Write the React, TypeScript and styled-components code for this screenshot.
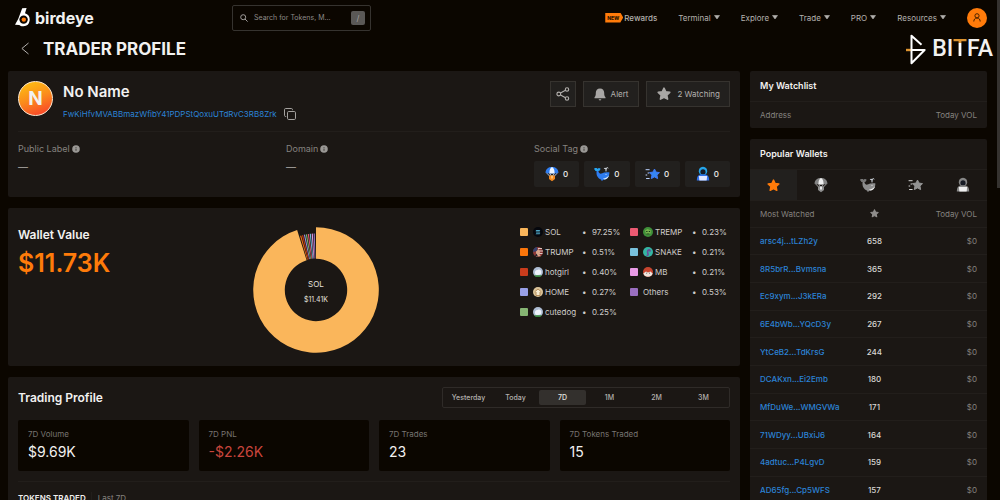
import React from "react";
import styled, { createGlobalStyle, css } from "styled-components";

const c = {
  page: "#0b0600",
  panel: "#1b1714",
  raised: "#22201e",
  line: "#221e1b",
  border: "#36332f",
  text: "#f2f1f0",
  soft: "#b4b1ae",
  muted: "#85827f",
  link: "#2b83d6",
  orange: "#ff7b0a",
  red: "#c9453c",
};

const GlobalStyle = createGlobalStyle`
  *, *::before, *::after { box-sizing: border-box; }
  html { background: ${c.page}; scrollbar-width: none; }
  body {
    margin: 0;
    background: ${c.page};
    color: ${c.text};
    font-family: Inter, "Liberation Sans", sans-serif;
    font-size: 8px;
    line-height: 12px;
  }
  h1, h2, p, ul, dl, dd, dt { margin: 0; padding: 0; }
  ul { list-style: none; }
  button, input { font: inherit; color: inherit; }
  button { border: 0; background: none; padding: 0; cursor: pointer; }
  a { text-decoration: none; color: inherit; }
  svg { display: block; flex: none; }
`;

const Header = styled.header`
  display: flex;
  align-items: center;
  height: 35px;
  padding: 0 13px 0 15px;
`;

const Brand = styled.a`
  display: flex;
  align-items: center;
  gap: 5px;
  width: 217px;
  font-size: 16px;
  line-height: 20px;
  font-weight: 700;
`;

const SearchBox = styled.label`
  display: flex;
  align-items: center;
  gap: 6px;
  width: 139px;
  height: 26px;
  padding: 0 5px 0 7px;
  border: 1px solid ${c.border};
  border-radius: 2px;
`;

const SearchInput = styled.input`
  flex: 1;
  min-width: 0;
  padding: 0;
  border: 0;
  outline: 0;
  background: none;
  font-size: 7px;
  &::placeholder { color: #8d8a87; opacity: 1; }
`;

const SlashKey = styled.kbd`
  width: 14px;
  height: 14px;
  border-radius: 2px;
  background: #5a5856;
  color: #a5a3a1;
  font-family: inherit;
  font-size: 8px;
  line-height: 14px;
  text-align: center;
`;

const Nav = styled.nav`
  display: flex;
  align-items: center;
  gap: 21px;
  margin-left: auto;
  color: ${c.soft};
`;

const RewardsLink = styled.a`
  display: flex;
  align-items: center;
  gap: 1px;
  font-weight: 500;
`;

const NewBadge = styled.span`
  width: 18px;
  height: 10px;
  padding-left: 2px;
  background: ${c.orange};
  clip-path: polygon(0 0, 84% 0, 100% 50%, 84% 100%, 0 100%);
  color: #2a1400;
  font-size: 5px;
  line-height: 10px;
  font-weight: 800;
`;

const NavButton = styled.button`
  display: flex;
  align-items: center;
  gap: 3px;
`;

const Avatar = styled.button`
  display: grid;
  place-items: center;
  width: 20px;
  height: 20px;
  border-radius: 50%;
  background: ${c.orange};
`;

const TitleRow = styled.div`
  display: flex;
  align-items: center;
  height: 28px;
  margin-bottom: 8px;
  padding: 0 7px 0 21px;
`;

const PageTitle = styled.h1`
  margin-left: 14px;
  font-size: 17px;
  line-height: 28px;
  font-weight: 700;
`;

const Partner = styled.div`
  display: flex;
  align-items: center;
  gap: 6px;
  margin-left: auto;
  font-family: Roboto, "Liberation Sans", sans-serif;
  font-size: 23px;
  line-height: 28px;
  font-weight: 500;
`;

const TwoToneLetter = styled.span`
  background: linear-gradient(#de9430 0 8px, #fff 8px);
  background-clip: text;
  -webkit-background-clip: text;
  color: transparent;
`;

const Main = styled.main`
  display: grid;
  grid-template-columns: minmax(0, 1fr) 237px;
  gap: 10px;
  padding: 0 13px 0 8px;
`;

const Column = styled.div`
  display: flex;
  flex-direction: column;
  gap: 11px;
`;

const Panel = styled.section<{ $fill?: boolean; $flush?: boolean }>`
  padding: ${(p) => (p.$flush ? "0" : "10px")};
  border-radius: 2px;
  background: ${c.panel};
  ${(p) => p.$fill && css`flex: 1;`}
`;

const ProfileHead = styled.div`
  display: flex;
  align-items: flex-start;
  height: 51px;
  border-bottom: 1px solid ${c.line};
`;

const Portrait = styled.div`
  display: grid;
  place-items: center;
  width: 35px;
  height: 35px;
  margin-right: 10px;
  border: 1px solid #ffe9cf;
  border-radius: 50%;
  background: linear-gradient(160deg, #fdb913 10%, #fb8a1c 50%, #f9402a 95%);
  font-size: 19px;
  line-height: 24px;
  font-weight: 700;
`;

const ProfileName = styled.h2`
  font-size: 15px;
  line-height: 22px;
  font-weight: 600;
`;

const AddressRow = styled.div`
  display: flex;
  align-items: center;
  gap: 7px;
  height: 22px;
`;

const AddressLink = styled.a`
  color: ${c.link};
`;

const Actions = styled.div`
  display: flex;
  gap: 7px;
  margin-left: auto;
`;

const ActionButton = styled.button`
  display: flex;
  align-items: center;
  gap: 5px;
  height: 26px;
  padding: 0 10px;
  border: 1px solid ${c.border};
  background: ${c.raised};
  color: ${c.soft};
`;

const IconButton = styled(ActionButton)`
  padding: 0 5px;
`;

const WatchButton = styled(ActionButton)`
  gap: 6px;
  padding: 0 9px 0 10px;
`;

const Facts = styled.dl`
  display: grid;
  grid-template-columns: 1fr 1fr 224px;
`;

const Fact = styled.div<{ $inset?: number }>`
  display: flex;
  flex-direction: column;
  gap: 6px;
  padding: 11px 0 0 ${(p) => p.$inset ?? 0}px;
`;

const FactLabel = styled.dt`
  display: flex;
  align-items: center;
  gap: 2px;
  font-size: 9px;
  color: ${c.muted};
`;

const FactValue = styled.dd`
  font-size: 10px;
  color: ${c.soft};
`;

const TagList = styled.dd`
  display: grid;
  grid-template-columns: repeat(4, 1fr);
  gap: 5px;
`;

const Tag = styled.span`
  display: flex;
  align-items: center;
  justify-content: center;
  gap: 4px;
  height: 26px;
  border-radius: 2px;
  background: ${c.raised};
  font-weight: 500;
`;

const WalletPanel = styled(Panel)`
  display: flex;
  padding: 19px 10px 13px;
`;

const WalletSummary = styled.div`
  flex: 0 0 33%;
`;

const SectionTitle = styled.h2`
  font-size: 12px;
  line-height: 16px;
  font-weight: 600;
`;

const WalletTotal = styled.p`
  margin-top: 4px;
  color: ${c.orange};
  font-size: 25px;
  line-height: 32px;
  font-weight: 600;
`;

const Legend = styled.ul`
  display: grid;
  grid-auto-flow: column;
  grid-template-rows: repeat(5, 10px);
  grid-template-columns: 110px 100px;
  row-gap: 10px;
  margin-left: auto;
  color: #cfcdcb;
`;

const LegendItem = styled.li`
  display: grid;
  grid-template-columns: 62px 10px auto;
  align-items: center;
  line-height: 10px;
`;

const LegendName = styled.span`
  display: flex;
  align-items: center;
  gap: 2px;
`;

const Swatch = styled.i<{ $color: string }>`
  width: 8px;
  height: 8px;
  margin-right: 3px;
  border-radius: 1px;
  background: ${(p) => p.$color};
`;

const TradingHead = styled.div`
  display: flex;
  align-items: center;
  justify-content: space-between;
  margin-bottom: 12px;
`;

const RangeTabs = styled.div`
  display: flex;
  padding: 2px;
  border: 1px solid #2f2b28;
  border-radius: 2px;
`;

const RangeTab = styled.button<{ $active?: boolean }>`
  width: 47px;
  height: 15px;
  border-radius: 2px;
  background: ${(p) => (p.$active ? "#33302d" : "none")};
  color: ${(p) => (p.$active ? "#e4e2e0" : c.soft)};
  font-size: 7px;
  line-height: 14px;
  font-weight: 500;
`;

const Stats = styled.dl`
  display: grid;
  grid-template-columns: repeat(4, 1fr);
  gap: 10px;
  padding-bottom: 10px;
  border-bottom: 1px solid ${c.line};
`;

const Stat = styled.div`
  padding: 9px 10px 10px;
  border-radius: 2px;
  background: ${c.page};
`;

const StatLabel = styled.dt`
  margin-bottom: 4px;
  color: #777471;
  line-height: 10px;
`;

const StatValue = styled.dd<{ $loss?: boolean }>`
  color: ${(p) => (p.$loss ? c.red : c.text)};
  font-size: 14px;
  line-height: 18px;
`;

const TokensHead = styled.div`
  display: flex;
  gap: 6px;
  margin-top: 10px;
  color: ${c.muted};
`;

const TokensTitle = styled.strong`
  padding-right: 5px;
  border-right: 1px solid ${c.line};
  color: ${c.text};
  font-weight: 600;
`;

const SideTitle = styled.h2`
  padding: 0 10px;
  border-bottom: 1px solid ${c.line};
  font-size: 9px;
  line-height: 30px;
  font-weight: 600;
`;

const ListTable = styled.table<{ $full?: boolean }>`
  width: 100%;
  border-collapse: collapse;
  table-layout: fixed;
  ${(p) => p.$full && css`height: 302px;`}
`;

const HeadCell = styled.th<{ $width: string; $align?: string }>`
  width: ${(p) => p.$width};
  height: 26px;
  padding: 0;
  color: ${c.muted};
  font-weight: 400;
  text-align: ${(p) => p.$align ?? "left"};
  &:first-child { padding-left: 10px; }
  &:last-child { padding-right: 10px; }
  svg { margin: 0 auto; }
`;

const Cell = styled.td<{ $align?: string; $muted?: boolean }>`
  padding: 0;
  border-top: 1px solid ${c.line};
  color: ${(p) => (p.$muted ? c.muted : "#d9d7d5")};
  font-weight: ${(p) => (p.$muted ? 400 : 500)};
  text-align: ${(p) => p.$align ?? "left"};
  white-space: nowrap;
  &:first-child { padding-left: 10px; }
  &:last-child { padding-right: 10px; }
`;

const WalletLink = styled.a`
  color: ${c.link};
  font-weight: 500;
`;

const IconTabs = styled.div`
  display: grid;
  grid-template-columns: repeat(5, 1fr);
  border-bottom: 1px solid ${c.line};
`;

const IconTab = styled.button<{ $active?: boolean }>`
  display: grid;
  place-items: center;
  height: 30px;
  background: ${(p) => (p.$active ? c.raised : "none")};
`;

const ScrollThumb = styled.div`
  position: fixed;
  top: 0;
  right: 0;
  width: 3px;
  height: 188px;
  background: #35322f;
`;

const STAR = "M8 1.300l2 4.200 4.600.6-3.400 3.200.9 4.600L8 11.700l-4.100 2.200.9-4.600L1.400 6.100l4.600-.6z";

const Star = ({ size, color }: { size: number; color: string }) => (
  <svg width={size} height={size} viewBox="0 0 16 16" aria-hidden="true">
    <path d={STAR} fill={color} stroke={color} strokeWidth="1.800" strokeLinejoin="round" />
  </svg>
);

const Caret = () => (
  <svg width="6" height="5" viewBox="0 0 6 5" aria-hidden="true">
    <path d="M.5.5h5L3 4z" fill={c.soft} stroke={c.soft} strokeWidth=".6" strokeLinejoin="round" />
  </svg>
);

const Info = () => (
  <svg width="8" height="8" viewBox="0 0 8 8" aria-hidden="true">
    <circle cx="4" cy="4" r="3.800" fill="#9a9895" />
    <path d="M4 3.600v2.200M4 2.100v.8" stroke={c.panel} strokeWidth=".7" />
  </svg>
);

type ToneProps = { gray?: boolean };

const Parachute = ({ gray }: ToneProps) => (
  <svg width="14" height="16" viewBox="0 0 14 16" aria-hidden="true">
    <path d="M1.200 6.500 5.500 11M12.800 6.500 8.500 11M4.500 7 6.500 10.500M9.500 7 7.500 10.500" stroke={gray ? "#aaa" : "#b9d6ff"} strokeWidth=".9" />
    <path d="M.6 6.600C.6 3 3.400 1 7 1s6.400 2 6.400 5.600C12.400 7.600 10.600 7.600 9.600 7 8 7.800 6 7.800 4.400 7 3.400 7.600 1.600 7.600.6 6.600z" fill={gray ? "#858585" : "#2f7df0"} />
    <path d="M4.400 7C4.400 4 5.500 1.500 7 1c1.500.5 2.600 3 2.600 6C8 7.800 6 7.800 4.400 7z" fill={gray ? "#efefef" : "#eef6ff"} />
    <path d="M4 9.500h6v3.600l-3 2.200-3-2.200z" fill={gray ? "#8f8f8f" : "#f58a1f"} />
    <path d="M6 9.500h2v3H6z" fill={gray ? "#e6e6e6" : "#ffbf6b"} />
  </svg>
);

const Whale = ({ gray }: ToneProps) => (
  <svg width="16" height="16" viewBox="0 0 16 16" aria-hidden="true">
    <path d="M.4 2.500C1.800 1.600 3 2 3.500 3 4.200 2 5.500 1.900 6.500 2.700 6.200 4 5.300 4.700 4.400 4.800c.1 2 1.300 3 2.800 2.800C9 7.200 10 5.900 15.300 6.200c.4 4.400-2.300 7.300-5.800 7.500l-1.700 1.200-.8-1.500C3.600 12.300 2 9.200 2.600 5 1.300 4.800.5 3.800.4 2.500z" fill={gray ? "#8e8e8e" : "#2e7cf0"} />
    <path d="M.4 2.500C1.800 1.600 3 2 3.500 3 4.200 2 5.500 1.900 6.500 2.700 6.200 4 5.300 4.700 4.400 4.800L2.600 5C1.300 4.800.5 3.800.4 2.500z" fill={gray ? "#777" : "#25a9ef"} />
    <path d="M9 12.600c2.600-.2 4.600-1.400 6-3.400-.5 2.400-2.200 4.100-4.800 4.400z" fill={gray ? "#eee" : "#d9ecff"} />
    <path d="M12 5V2.800M12 2.800C11.500 1.700 10.500 1.900 10.300 2.600M12 2.800c.3-1.300 1.400-1.500 2-.9" fill="none" stroke="#eef6ff" strokeWidth=".9" strokeLinecap="round" />
    <circle cx="12" cy="8.300" r=".5" fill="#fff" />
  </svg>
);

const ShootingStar = ({ gray }: ToneProps) => (
  <svg width="15" height="14" viewBox="0 0 15 14" aria-hidden="true">
    <path d="M1 2.700h3.200M3 6h.8M1 8h.8M1.500 11.500h2.700" stroke={gray ? "#d2d2d2" : "#bcd3ff"} strokeWidth="1" strokeLinecap="round" />
    <path d="M9.500 2l1.500 3.100 3.500.5-2.500 2.500.6 3.500-3.100-1.700-3.200 1.700.6-3.500-2.500-2.500 3.600-.5z" fill={gray ? "#929292" : "#3586f5"} stroke={gray ? "#929292" : "#4078f2"} strokeWidth="1" strokeLinejoin="round" />
  </svg>
);

const Hacker = ({ gray }: ToneProps) => (
  <svg width="14" height="16" viewBox="0 0 14 16" aria-hidden="true">
    <path d="M7 .8c3 0 4.400 2.200 4.200 4.800C11 8 9.500 9.200 7 9.200S3 8 2.800 5.600C2.600 3 4 .8 7 .8z" fill={gray ? "#868686" : "#25a5ea"} />
    <ellipse cx="7" cy="5.900" rx="2.600" ry="2.700" fill="#161a24" />
    <path d="M.8 14.500c0-3.600 1.300-5.400 3.300-5.900h5.800c2 .5 3.300 2.300 3.300 5.900z" fill={gray ? "#8a8a8a" : "#3071ea"} />
    <path d="M2.800 10h8.400l-.6 4.500H3.400z" fill={gray ? "#efefef" : "#e2e8ff"} />
  </svg>
);

const BirdMark = () => (
  <svg width="15" height="19" viewBox="0 0 15 19" aria-hidden="true">
    <path d="M7.200.2 11.600 0 10 5.300a6.600 6.600 0 0 1-1.500 12.900C6.800 18.400 5.300 17.900 4.300 17L0 16.800 3.200 11z" fill="#fff" />
    <circle cx="8.600" cy="11.600" r="4.200" fill={c.page} />
    <circle cx="8.800" cy="11.600" r="2.200" fill={c.orange} />
  </svg>
);

const BitfaMark = () => (
  <svg width="20" height="31" viewBox="0 0 20 31" aria-hidden="true">
    <path d="M0 16h5" stroke="#de9430" strokeWidth="2.400" />
    <path d="M15.500 10.700 5.500 1.700v27.600L18.600 16H5.500" fill="none" stroke="#fff" strokeWidth="2" strokeLinejoin="round" />
    <path d="M8.500 16 15.500 10.700" stroke="#fff" strokeWidth="0" />
  </svg>
);

const CENTER = 63;
const polar = (r: number, deg: number) => {
  const a = ((deg - 90) * Math.PI) / 180;
  return `${(CENTER + r * Math.cos(a)).toFixed(2)} ${(CENTER + r * Math.sin(a)).toFixed(2)}`;
};
const arc = (from: number, to: number, outer: number, inner: number) => {
  const large = to - from > 180 ? 1 : 0;
  return `M${polar(outer, from)}A${outer} ${outer} 0 ${large} 1 ${polar(outer, to)}L${polar(inner, to)}A${inner} ${inner} 0 ${large} 0 ${polar(inner, from)}Z`;
};

const slices = ["#f07010", "#c8381b", "#8f98dc", "#80b26c", "#e4566e", "#72bcd8", "#dd95dd", "#9670bd"];

const Donut = () => (
  <svg width="126" height="126" viewBox="0 0 126 126" role="img" aria-label="Wallet value by token">
    <path d={arc(0, 342.5, 62.8, 31.2)} fill="#fab65b" />
    {slices.map((fill, i) => (
      <path key={fill} d={arc(343.6 + i * 2, 344.8 + i * 2, 56.5, 31.5)} fill={fill} />
    ))}
    <g fill="#e3e1df" fontFamily="Inter, sans-serif" fontSize="8" textAnchor="middle">
      <text x="63" y="60">SOL</text>
      <text x="63" y="75" fontSize="7">$11.41K</text>
    </g>
  </svg>
);

const tokenArt: Record<string, React.ReactNode> = {
  SOL: (
    <>
      <circle cx="5" cy="5" r="5" fill="#05070d" />
      <path d="M3.300 3h4l-.7 1H2.600zM2.600 4.600h4l.7 1h-4zM3.300 6.200h4l-.7 1H2.600z" fill="#4fa9c9" />
    </>
  ),
  TRUMP: (
    <>
      <circle cx="5" cy="5" r="5" fill="#8c3a38" />
      <path d="M0 5a5 5 0 0 1 4-4.900L4.500 4z" fill="#35406e" />
      <path d="M5 1.500h4M6 4h4M6 6.500h3.500" stroke="#e6d8d2" strokeWidth=".9" />
      <path d="M3 4.500 5.500 2l1.600 2.500-.6 3L8 9.200 3 9.500z" fill="#d7a78c" />
      <path d="M2 9l1.500-2.500L5 9.500z" fill="#20202c" />
    </>
  ),
  cloud: (
    <>
      <circle cx="5" cy="5" r="5" fill="#aebdd4" />
      <path d="M1 8.200a5 5 0 0 0 8 0z" fill="#37883f" />
      <path d="M2 6.500C1.500 4 3 2.800 4.500 3c1-1.200 4-.5 3.800 2C8.500 7 7.500 8 5 8S2.500 7.500 2 6.500z" fill="#eef3fb" />
    </>
  ),
  HOME: (
    <>
      <circle cx="5" cy="5" r="5" fill="#dcc59b" />
      <path d="M1.500 5 5 2l3.500 3M3 5v3.500h4V5" fill="#f6ead0" stroke="#a77a43" strokeWidth=".8" />
    </>
  ),
  TREMP: (
    <>
      <circle cx="5" cy="5" r="5" fill="#3f8f3a" />
      <path d="M2 3.500 4.500 2l3.500 1.500-.5 3L5 8 2.800 6.500z" fill="#77b24e" />
      <path d="M3.200 4.500h1.300M5.800 4.500h1.300M3.500 7h3" stroke="#123c18" strokeWidth="1" />
    </>
  ),
  SNAKE: (
    <>
      <circle cx="5" cy="5" r="5" fill="#35b5a3" />
      <path d="M3.500 8.500C7.500 8 2.500 5 5.500 3c1.500-.6 2 1 1 1.500" fill="none" stroke="#6b4b9a" strokeWidth="1.600" />
    </>
  ),
  MB: (
    <>
      <circle cx="5" cy="5" r="5" fill="#c8452f" />
      <path d="M.3 6.500 3 4.500l2 1 2.500-1 2.200 2A5 5 0 0 1 .3 6.500z" fill="#f0e4dc" />
      <path d="M3.300 6.200h.8M6 6.200h.8" stroke="#222" strokeWidth=".8" />
    </>
  ),
};

const TokenIcon = ({ art }: { art: string }) => (
  <svg width="10" height="10" viewBox="0 0 10 10" aria-hidden="true">{tokenArt[art]}</svg>
);

const tokens = [
  { name: "SOL", art: "SOL", color: "#fab65b", share: "97.25%" },
  { name: "TRUMP", art: "TRUMP", color: "#fb760b", share: "0.51%" },
  { name: "hotgirl", art: "cloud", color: "#c93c1c", share: "0.40%" },
  { name: "HOME", art: "HOME", color: "#989fe6", share: "0.27%" },
  { name: "cutedog", art: "cloud", color: "#86b573", share: "0.25%" },
  { name: "TREMP", art: "TREMP", color: "#ec5a72", share: "0.23%" },
  { name: "SNAKE", art: "SNAKE", color: "#79c1dc", share: "0.21%" },
  { name: "MB", art: "MB", color: "#e99be6", share: "0.21%" },
  { name: "Others", color: "#9a6fc0", share: "0.53%" },
];

const wallets: [string, number][] = [
  ["arsc4j...tLZh2y", 658],
  ["8R5brR...Bvmsna", 365],
  ["Ec9xym...J3kERa", 292],
  ["6E4bWb...YQcD3y", 267],
  ["YtCeB2...TdKrsG", 244],
  ["DCAKxn...Ei2Emb", 180],
  ["MfDuWe...WMGVWa", 171],
  ["71WDyy...UBxiJ6", 164],
  ["4adtuc...P4LgvD", 159],
  ["AD65fg...Cp5WFS", 157],
];

const stats = [
  { label: "7D Volume", value: "$9.69K" },
  { label: "7D PNL", value: "-$2.26K", loss: true },
  { label: "7D Trades", value: "23" },
  { label: "7D Tokens Traded", value: "15" },
];

const socialIcons = [Parachute, Whale, ShootingStar, Hacker];
const socialNames = ["Airdrop", "Whale", "Rising star", "Insider"];

export default function App() {
  return (
    <>
      <GlobalStyle />
      <Header>
        <Brand href="#">
          <BirdMark />
          birdeye
        </Brand>
        <SearchBox>
          <svg width="8" height="8" viewBox="0 0 8 8" fill="none" stroke="#a09d9a" aria-hidden="true">
            <circle cx="3.200" cy="3.200" r="2.500" />
            <path d="M5 5l2.600 2.600" />
          </svg>
          <SearchInput type="text" aria-label="Search" placeholder="Search for Tokens, M..." />
          <SlashKey>/</SlashKey>
        </SearchBox>
        <Nav>
          <RewardsLink href="#rewards">
            <NewBadge>NEW</NewBadge>
            Rewards
          </RewardsLink>
          {["Terminal", "Explore", "Trade", "PRO", "Resources"].map((item) => (
            <NavButton key={item}>
              {item}
              <Caret />
            </NavButton>
          ))}
          <Avatar aria-label="Account">
            <svg width="8" height="9" viewBox="0 0 8 9" fill="none" stroke="#4a2200" strokeWidth="1" aria-hidden="true">
              <circle cx="4" cy="2.800" r="2.100" />
              <path d="M.8 8.500C.9 6.300 2 5 4 5s3.100 1.300 3.200 3.500" />
            </svg>
          </Avatar>
        </Nav>
      </Header>

      <TitleRow>
        <button aria-label="Back">
          <svg width="8" height="14" viewBox="0 0 8 14" fill="none" stroke={c.soft} aria-hidden="true">
            <path d="M7.500 1 .9 6.500l6.600 5.500" />
          </svg>
        </button>
        <PageTitle>TRADER PROFILE</PageTitle>
        <Partner>
          <BitfaMark />
          <span>BI<TwoToneLetter>T</TwoToneLetter>FA</span>
        </Partner>
      </TitleRow>

      <Main>
        <Column>
          <Panel>
            <ProfileHead>
              <Portrait>N</Portrait>
              <div>
                <ProfileName>No Name</ProfileName>
                <AddressRow>
                  <AddressLink href="#wallet">FwKiHfvMVABBmazWfibY41PDPStQoxuUTdRvC3RB8Zrk</AddressLink>
                  <button aria-label="Copy address">
                    <svg width="12" height="12" viewBox="0 0 12 12" fill="none" stroke="#a5a29f" aria-hidden="true">
                      <rect x="3.500" y="3.500" width="8" height="8" rx="1.200" />
                      <path d="M2.200 8.500H1.700A1.200 1.200 0 0 1 .5 7.300V1.700A1.200 1.200 0 0 1 1.700.5h5.600a1.200 1.200 0 0 1 1.200 1.200v.5" />
                    </svg>
                  </button>
                </AddressRow>
              </div>
              <Actions>
                <IconButton aria-label="Share">
                  <svg width="14" height="14" viewBox="0 0 14 14" fill="none" stroke={c.soft} strokeWidth="1.100" aria-hidden="true">
                    <circle cx="2.800" cy="7" r="1.900" />
                    <circle cx="11" cy="2.500" r="1.700" />
                    <circle cx="11" cy="11.500" r="1.700" />
                    <path d="M4.500 6.100 9.500 3.300M4.500 7.900l5 2.800" />
                  </svg>
                </IconButton>
                <ActionButton>
                  <svg width="12" height="13" viewBox="0 0 12 13" fill="#a9a7a5" aria-hidden="true">
                    <path d="M6 .5c2.800 0 4.200 2 4.200 4.300 0 2.500.3 3.600 1.300 4.500v1H.5v-1c1-.9 1.300-2 1.300-4.500C1.800 2.500 3.200.5 6 .5zM4.500 11.300h3L6 12.700z" />
                  </svg>
                  Alert
                </ActionButton>
                <WatchButton>
                  <Star size={14} color="#a9a7a5" />
                  2 Watching
                </WatchButton>
              </Actions>
            </ProfileHead>
            <Facts>
              <Fact>
                <FactLabel>Public Label <Info /></FactLabel>
                <FactValue>—</FactValue>
              </Fact>
              <Fact $inset={24}>
                <FactLabel>Domain <Info /></FactLabel>
                <FactValue>—</FactValue>
              </Fact>
              <Fact $inset={28}>
                <FactLabel>Social Tag <Info /></FactLabel>
                <TagList>
                  {socialIcons.map((Icon, i) => (
                    <Tag key={i}><Icon />0</Tag>
                  ))}
                </TagList>
              </Fact>
            </Facts>
          </Panel>

          <WalletPanel>
            <WalletSummary>
              <SectionTitle>Wallet Value</SectionTitle>
              <WalletTotal>$11.73K</WalletTotal>
            </WalletSummary>
            <Donut />
            <Legend>
              {tokens.map((t) => (
                <LegendItem key={t.name}>
                  <LegendName>
                    <Swatch $color={t.color} />
                    {t.art && <TokenIcon art={t.art} />}
                    {t.name}
                  </LegendName>
                  <span>•</span>
                  <span>{t.share}</span>
                </LegendItem>
              ))}
            </Legend>
          </WalletPanel>

          <Panel $fill>
            <TradingHead>
              <SectionTitle>Trading Profile</SectionTitle>
              <RangeTabs>
                {["Yesterday", "Today", "7D", "1M", "2M", "3M"].map((r) => (
                  <RangeTab key={r} $active={r === "7D"}>{r}</RangeTab>
                ))}
              </RangeTabs>
            </TradingHead>
            <Stats>
              {stats.map((s) => (
                <Stat key={s.label}>
                  <StatLabel>{s.label}</StatLabel>
                  <StatValue $loss={s.loss}>{s.value}</StatValue>
                </Stat>
              ))}
            </Stats>
            <TokensHead>
              <TokensTitle>TOKENS TRADED</TokensTitle>
              <span>Last 7D</span>
            </TokensHead>
          </Panel>
        </Column>

        <Column>
          <Panel $flush>
            <SideTitle>My Watchlist</SideTitle>
            <ListTable>
              <thead>
                <tr>
                  <HeadCell $width="50%">Address</HeadCell>
                  <HeadCell $width="50%" $align="right">Today VOL</HeadCell>
                </tr>
              </thead>
            </ListTable>
          </Panel>

          <Panel $flush $fill>
            <SideTitle>Popular Wallets</SideTitle>
            <IconTabs>
              <IconTab $active aria-label="Most watched">
                <Star size={13} color={c.orange} />
              </IconTab>
              {socialIcons.map((Icon, i) => (
                <IconTab key={i} aria-label={socialNames[i]}><Icon gray /></IconTab>
              ))}
            </IconTabs>
            <ListTable $full>
              <thead>
                <tr>
                  <HeadCell $width="42%">Most Watched</HeadCell>
                  <HeadCell $width="21%" $align="center" aria-label="Watchers">
                    <Star size={9} color="#8f8d8b" />
                  </HeadCell>
                  <HeadCell $width="37%" $align="right">Today VOL</HeadCell>
                </tr>
              </thead>
              <tbody>
                {wallets.map(([name, watchers]) => (
                  <tr key={name}>
                    <Cell><WalletLink href="#wallet">{name}</WalletLink></Cell>
                    <Cell $align="center">{watchers}</Cell>
                    <Cell $align="right" $muted>$0</Cell>
                  </tr>
                ))}
              </tbody>
            </ListTable>
          </Panel>
        </Column>
      </Main>
      <ScrollThumb />
    </>
  );
}
